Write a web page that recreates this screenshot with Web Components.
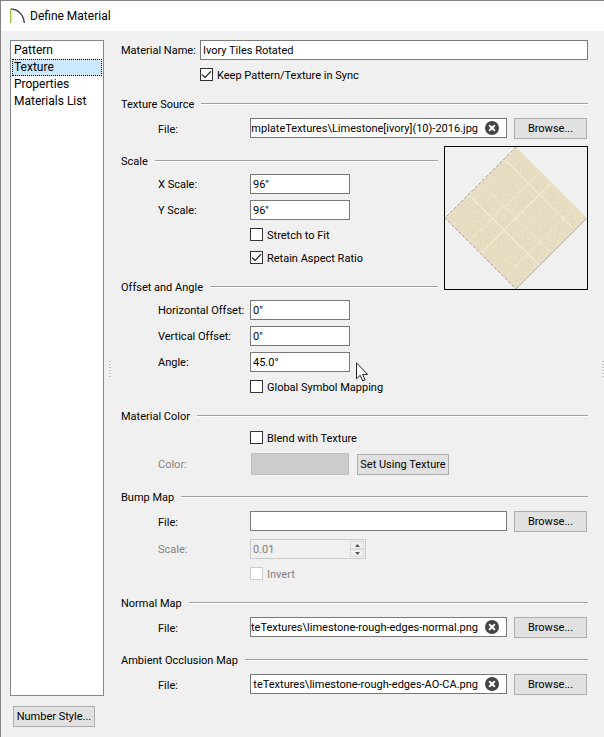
<!DOCTYPE html>
<html lang="en">
<head>
<meta charset="utf-8">
<meta name="viewport" content="width=device-width, initial-scale=1">
<title>Define Material</title>
<style>
  :root {
    --face: #f0f0f0;
    --field-border: #7a7a7a;
    --soft-border: #cccccc;
    --button-face: #e1e1e1;
    --button-border: #adadad;
    --disabled: #838383;
    --indent: 37px;
    --label-width: 92px;
  }
  body {
    margin: 0;
    color: #000;
    font: 11px/16px Tahoma, Roboto, sans-serif;
  }
</style>
</head>
<body>
<dialog-window>
  <title-bar slot="title">Define Material</title-bar>
  <page-list slot="side" items="Pattern|Texture|Properties|Materials List" current="Texture"></page-list>
  <push-button slot="side">Number Style...</push-button>

  <form-section>
    <text-field label="Material Name:" value="Ivory Tiles Rotated" class="name"></text-field>
    <check-field label="Keep Pattern/Texture in Sync" checked class="name"></check-field>
  </form-section>
  <form-section heading="Texture Source">
    <file-field label="File:" value="mplateTextures\Limestone[ivory](10)-2016.jpg"></file-field>
  </form-section>
  <preview-split>
    <form-section heading="Scale">
      <text-field label="X Scale:" value="96&quot;"></text-field>
      <text-field label="Y Scale:" value="96&quot;"></text-field>
      <check-field label="Stretch to Fit"></check-field>
      <check-field label="Retain Aspect Ratio" checked></check-field>
    </form-section>
    <form-section heading="Offset and Angle">
      <text-field label="Horizontal Offset:" value="0&quot;"></text-field>
      <text-field label="Vertical Offset:" value="0&quot;"></text-field>
      <text-field label="Angle:" value="45.0°"></text-field>
      <check-field label="Global Symbol Mapping"></check-field>
    </form-section>
    <texture-preview slot="preview"></texture-preview>
  </preview-split>
  <form-section heading="Material Color">
    <check-field label="Blend with Texture"></check-field>
    <color-field label="Color:"><push-button>Set Using Texture</push-button></color-field>
  </form-section>
  <form-section heading="Bump Map">
    <file-field label="File:" value=""></file-field>
    <spin-field label="Scale:" value="0.01"></spin-field>
    <check-field label="Invert" disabled></check-field>
  </form-section>
  <form-section heading="Normal Map">
    <file-field label="File:" value="teTextures\limestone-rough-edges-normal.png"></file-field>
  </form-section>
  <form-section heading="Ambient Occlusion Map">
    <file-field label="File:" value="teTextures\limestone-rough-edges-AO-CA.png"></file-field>
  </form-section>

  <mouse-pointer slot="pointer"></mouse-pointer>
</dialog-window>

<script>
// Shared rules for every control row
const rowStyles = `
  * { box-sizing: border-box; }
  :host { display: block; }
  .row {
    display: flex;
    align-items: center;
    height: 26px;
    padding-left: var(--indent);
  }
  .row > label:first-child {
    flex: none;
    width: var(--label-width);
    padding-top: 2px;
    white-space: nowrap;
  }
  input {
    font: inherit;
    color: inherit;
    margin: 0;
    min-width: 0;
    border-radius: 0;
    outline: none;
  }
  input:disabled { color: var(--disabled); }
`;

class BaseElement extends HTMLElement {
  constructor() {
    super();
    this.attachShadow({ mode: 'open' });
  }

  connectedCallback() {
    const template = document.createElement('template');
    template.innerHTML = this.render();
    this.shadowRoot.replaceChildren(template.content.cloneNode(true));
    this.ready();
  }

  ready() {}

  attr(name) {
    return (this.getAttribute(name) || '').replace(/&/g, '&amp;').replace(/"/g, '&quot;');
  }
}

class DialogWindow extends BaseElement {
  render() {
    return `
      <style>
        * { box-sizing: border-box; }
        :host {
          display: flex;
          flex-direction: column;
          box-sizing: border-box;
          position: relative;
          min-height: 100vh;
          background: var(--face);
          border: solid #838383;
          border-width: 1px 0 0 1px;
        }
        .body { flex: 1; display: flex; }
        .side {
          flex: none;
          display: flex;
          flex-direction: column;
          align-items: flex-start;
          gap: 10px;
          width: 94px;
          margin: 9px 5px 10px 9px;
        }
        .grip {
          flex: none;
          align-self: center;
          width: 2px;
          height: 17px;
          margin-bottom: 30px;
          background: repeating-linear-gradient(#c0c0c0 0 1px, #fafafa 1px 2px, transparent 2px 3px);
        }
        main { flex: 1; min-width: 0; padding: 6px 14px 0 10px; }
        ::slotted(page-list) { flex: 1; }
        ::slotted(push-button) { min-width: 82px; margin-left: 3px; }
      </style>
      <slot name="title"></slot>
      <div class="body">
        <div class="side"><slot name="side"></slot></div>
        <div class="grip"></div>
        <main><slot></slot></main>
        <div class="grip"></div>
      </div>
      <slot name="pointer"></slot>
    `;
  }
}

class TitleBar extends BaseElement {
  render() {
    return `
      <style>
        :host {
          display: flex;
          align-items: center;
          gap: 4px;
          height: 30px;
          padding-left: 9px;
          background: #fff;
          font-size: 12px;
        }
        h1 { margin: 0; font: inherit; }
      </style>
      <svg width="16" height="16" viewBox="0 0 16 16" fill="none" aria-hidden="true">
        <path d="M1 .8C8.500 1.300 13.700 7 14.300 15" stroke="#333" stroke-width="1.300"/>
        <path d="M.7 1v14" stroke="#9bc53d" stroke-width="1.400"/>
      </svg>
      <h1><slot></slot></h1>
    `;
  }
}

class PageList extends BaseElement {
  render() {
    const current = this.getAttribute('current');
    const links = this.getAttribute('items').split('|').map((name) =>
      `<a href="#${name.replace(/ /g, '-')}"${name === current ? ' aria-current="page"' : ''}>${name}</a>`
    ).join('');
    return `
      <style>
        :host {
          display: block;
          box-sizing: border-box;
          align-self: stretch;
          padding: 1px;
          background: #fff;
          border: 1px solid #828790;
          font-size: 12px;
        }
        a {
          display: block;
          box-sizing: border-box;
          height: 17px;
          padding: 0 1px;
          border: 1px solid transparent;
          line-height: 15px;
          color: inherit;
          text-decoration: none;
          white-space: nowrap;
        }
        a[aria-current] { background: #cce8ff; border: 1px dotted #000; }
      </style>
      <nav>${links}</nav>
    `;
  }
}

class PushButton extends BaseElement {
  render() {
    return `
      <style>
        :host { display: inline-block; flex: none; }
        button {
          display: block;
          box-sizing: border-box;
          width: 100%;
          height: 21px;
          padding: 1px 1px 0;
          font: inherit;
          color: inherit;
          white-space: nowrap;
          background: var(--button-face);
          border: 1px solid var(--button-border);
        }
      </style>
      <button type="button"><slot></slot></button>
    `;
  }
}

class FormSection extends BaseElement {
  render() {
    const heading = this.attr('heading');
    return `
      <style>
        :host { display: block; padding-bottom: 10px; }
        header { display: flex; align-items: center; gap: 7px; height: 16px; margin-bottom: 2px; }
        h2 { margin: 0; padding-top: 2px; font: inherit; }
        .line { flex: 1; height: 1px; background: #a0a0a0; border-bottom: 1px solid #fff; }
        ::slotted(.name) { --indent: 0px; --label-width: 79px; }
      </style>
      ${heading ? `<header><h2>${heading}</h2><div class="line"></div></header>` : ''}
      <slot></slot>
    `;
  }
}

class PreviewSplit extends BaseElement {
  render() {
    return `
      <style>
        :host { display: flex; align-items: flex-start; gap: 6px; }
        .fields { flex: 1; min-width: 0; }
        /* the preview begins a little above the first heading */
        ::slotted(texture-preview) { flex: none; margin-top: -7px; }
      </style>
      <div class="fields"><slot></slot></div>
      <slot name="preview"></slot>
    `;
  }
}

class TextField extends BaseElement {
  render() {
    return `
      <style>
        ${rowStyles}
        input {
          width: 100px;
          height: 20px;
          padding: 1px 2px 0;
          background: #fff;
          border: 1px solid var(--field-border);
        }
        :host(.name) input { flex: 1; }
      </style>
      <div class="row">
        <label for="field">${this.attr('label')}</label>
        <input id="field" type="text" value="${this.attr('value')}">
      </div>
    `;
  }
}

class CheckField extends BaseElement {
  render() {
    const disabled = this.hasAttribute('disabled');
    return `
      <style>
        ${rowStyles}
        .row { height: 23px; padding-left: calc(var(--indent) + var(--label-width)); }
        .row > label:first-child {
          display: flex;
          align-items: center;
          gap: 4px;
          width: auto;
          padding: 0;
        }
        .box { display: grid; }
        .box > * { grid-area: 1 / 1; }
        .text { padding-top: 2px; }
        input {
          appearance: none;
          width: 13px;
          height: 13px;
          background: #fff;
          border: 1px solid #333;
        }
        svg { visibility: hidden; pointer-events: none; }
        input:checked + svg { visibility: visible; }
        input:disabled { border-color: var(--soft-border); }
        :host([disabled]) { color: var(--disabled); }
      </style>
      <div class="row">
        <label>
          <span class="box">
            <input type="checkbox"${this.hasAttribute('checked') ? ' checked' : ''}${disabled ? ' disabled' : ''}>
            <svg width="13" height="13" viewBox="0 0 13 13" fill="none" stroke="#333" stroke-width="1.300" aria-hidden="true">
              <path d="M2 6.500l3 3L11 3.300"/>
            </svg>
          </span>
          <span class="text">${this.attr('label')}</span>
        </label>
      </div>
    `;
  }
}

class FileField extends BaseElement {
  render() {
    const value = this.attr('value');
    return `
      <style>
        ${rowStyles}
        .row { align-items: flex-start; height: 29px; padding-top: 4px; padding-right: 1px; }
        label { line-height: 20px; }
        .field {
          flex: 1;
          min-width: 0;
          display: flex;
          align-items: center;
          height: 20px;
          margin-right: 7px;
          background: #fff;
          border: 1px solid var(--field-border);
        }
        input { flex: 1; height: 18px; padding: 1px 0 0; border: 0; background: none; text-align: right; }
        .clear { flex: none; display: flex; margin: 0 7px; padding: 0; border: 0; background: none; }
        push-button { width: 73px; }
      </style>
      <div class="row">
        <label for="file">${this.attr('label')}</label>
        <div class="field">
          <input id="file" type="text" value="${value}">
          ${value ? `
          <button class="clear" type="button" aria-label="Clear">
            <svg width="14" height="14" viewBox="0 0 14 14" aria-hidden="true">
              <circle cx="7" cy="7" r="7" fill="#444"/>
              <path d="M4.700 4.700l4.600 4.600M9.300 4.700L4.700 9.300" stroke="#fff" stroke-width="2" stroke-linecap="round"/>
            </svg>
          </button>` : ''}
        </div>
        <push-button>Browse...</push-button>
      </div>
    `;
  }

  // Long paths show their tail, the file name
  ready() {
    const input = this.shadowRoot.querySelector('input');
    window.addEventListener('load', () => {
      input.scrollLeft = input.scrollWidth;
    });
  }
}

class ColorField extends BaseElement {
  render() {
    return `
      <style>
        ${rowStyles}
        .row { height: 30px; }
        label { color: var(--disabled); }
        .swatch {
          width: 98px;
          height: 22px;
          margin: 0 8px 0 1px;
          padding: 0;
          background: #cccccc;
          border: 1px solid #bfbfbf;
        }
        ::slotted(push-button) { min-width: 92px; }
      </style>
      <div class="row">
        <label for="color">${this.attr('label')}</label>
        <button id="color" class="swatch" type="button" disabled></button>
        <slot></slot>
      </div>
    `;
  }
}

class SpinField extends BaseElement {
  render() {
    return `
      <style>
        ${rowStyles}
        label { color: var(--disabled); }
        .field {
          display: flex;
          width: 116px;
          height: 20px;
          padding: 1px;
          border: 1px solid var(--soft-border);
        }
        input { flex: 1; padding: 2px 1px 0; border: 0; background: none; }
        .steps { display: grid; grid-template-rows: 8px 8px; width: 14px; }
        .steps button {
          display: grid;
          place-items: center;
          padding: 0;
          background: var(--face);
          border: 1px solid #d9d9d9;
        }
      </style>
      <div class="row">
        <label for="spin">${this.attr('label')}</label>
        <div class="field">
          <input id="spin" type="text" inputmode="decimal" value="${this.attr('value')}" disabled>
          <div class="steps">
            <button type="button" aria-label="Increase" disabled>
              <svg width="5" height="3" viewBox="0 0 5 3"><path d="M0 3h5L2.500 0z" fill="#555"/></svg>
            </button>
            <button type="button" aria-label="Decrease" disabled>
              <svg width="5" height="3" viewBox="0 0 5 3"><path d="M0 0h5L2.500 3z" fill="#555"/></svg>
            </button>
          </div>
        </div>
      </div>
    `;
  }
}

class TexturePreview extends BaseElement {
  render() {
    return `
      <style>
        :host { display: block; border: 1px solid #000; }
        svg { display: block; }
      </style>
      <svg width="142" height="142" viewBox="0 0 142 142" fill="none" role="img">
        <defs>
          <filter id="grain" x="0" y="0" width="100%" height="100%">
            <feTurbulence type="fractalNoise" baseFrequency=".45" numOctaves="3" seed="4"/>
            <feColorMatrix values="0 0 0 0 .62  0 0 0 0 .55  0 0 0 0 .38  .7 0 0 0 -.27"/>
          </filter>
          <clipPath id="tile"><path d="M71 0L142 71L71 142L0 71z"/></clipPath>
        </defs>
        <g clip-path="url(#tile)">
          <rect width="142" height="142" fill="#e9dfc5"/>
          <rect width="142" height="142" filter="url(#grain)"/>
          <g stroke="#f6f1e0">
            <path d="M60 13l70 70M24 48l71 71M105 37L36 106"/>
            <path d="M37 37l71 71M95 25L23 95M130 60l-71 71" stroke-opacity=".6" stroke-dasharray="9 2"/>
          </g>
        </g>
        <path d="M71 0L0 71L71 142" stroke="#a3a098" stroke-dasharray="3 2"/>
        <path d="M71 142L142 71" stroke="#b5b2a8"/>
      </svg>
    `;
  }
}

class MousePointer extends BaseElement {
  render() {
    return `
      <style>
        :host { position: absolute; left: 355px; top: 361px; pointer-events: none; }
        svg { display: block; }
      </style>
      <svg width="13" height="20" viewBox="0 0 13 20" aria-hidden="true">
        <path d="M.5.8v16l3.700-3.500 2.500 5.600 2.400-1-2.500-5.500h5z" fill="#fff" stroke="#222"/>
      </svg>
    `;
  }
}

customElements.define('push-button', PushButton);
customElements.define('title-bar', TitleBar);
customElements.define('page-list', PageList);
customElements.define('form-section', FormSection);
customElements.define('preview-split', PreviewSplit);
customElements.define('text-field', TextField);
customElements.define('check-field', CheckField);
customElements.define('file-field', FileField);
customElements.define('color-field', ColorField);
customElements.define('spin-field', SpinField);
customElements.define('texture-preview', TexturePreview);
customElements.define('mouse-pointer', MousePointer);
customElements.define('dialog-window', DialogWindow);
</script>
</body>
</html>
